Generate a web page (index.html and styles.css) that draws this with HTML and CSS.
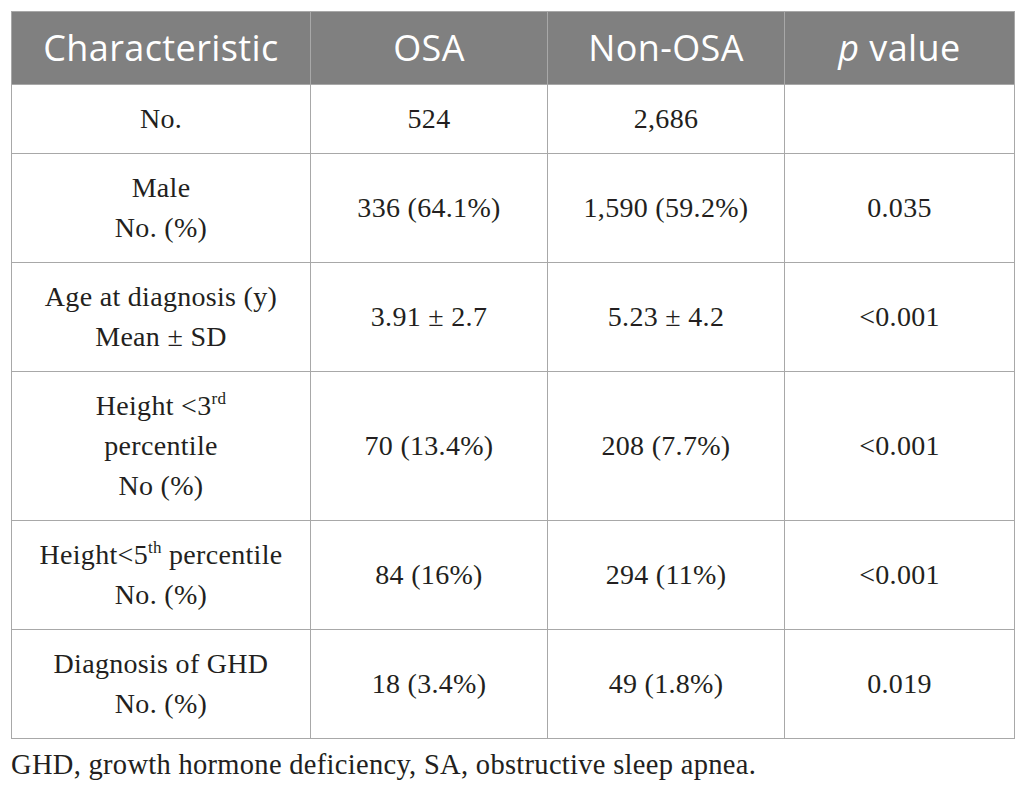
FILE: index.html
```html
<!DOCTYPE html>
<html>
<head>
<meta charset="utf-8">
<link rel="stylesheet" href="styles.css">
</head>
<body>
<div class="page">
  <table class="data">
    <colgroup>
      <col class="c1"><col class="c2"><col class="c3"><col class="c4">
    </colgroup>
    <thead>
      <tr>
        <th>Characteristic</th>
        <th>OSA</th>
        <th>Non-OSA</th>
        <th><i>p</i> value</th>
      </tr>
    </thead>
    <tbody>
      <tr><td>No.</td><td>524</td><td>2,686</td><td></td></tr>
      <tr><td>Male<br>No. (%)</td><td>336 (64.1%)</td><td>1,590 (59.2%)</td><td>0.035</td></tr>
      <tr><td>Age at diagnosis (y)<br>Mean ± SD</td><td>3.91 ± 2.7</td><td>5.23 ± 4.2</td><td>&lt;0.001</td></tr>
      <tr><td>Height &lt;3<sup>rd</sup><br>percentile<br>No (%)</td><td>70 (13.4%)</td><td>208 (7.7%)</td><td>&lt;0.001</td></tr>
      <tr><td>Height&lt;5<sup>th</sup> percentile<br>No. (%)</td><td>84 (16%)</td><td>294 (11%)</td><td>&lt;0.001</td></tr>
      <tr><td>Diagnosis of GHD<br>No. (%)</td><td>18 (3.4%)</td><td>49 (1.8%)</td><td>0.019</td></tr>
    </tbody>
  </table>
  <p class="note">GHD, growth hormone deficiency, SA, obstructive sleep apnea.</p>
</div>
</body>
</html>
```

FILE: styles.css
```css
html, body {
  margin: 0;
  padding: 0;
  background: #ffffff;
}

.page {
  padding: 11px 12px 0 11px;
}

.data {
  width: 1003px;
  border-collapse: collapse;
  table-layout: fixed;
  font-family: "Liberation Serif", "Times New Roman", serif;
  color: #231f20;
}

.c1 { width: 299px; }
.c2 { width: 237px; }
.c3 { width: 237px; }
.c4 { width: 230px; }

.data th,
.data td {
  border: 1px solid #a8a8a8;
  text-align: center;
  vertical-align: middle;
}

.data th {
  background: #808080;
  color: #ffffff;
  font-family: "Open Sans", "Liberation Sans", sans-serif;
  font-weight: 400;
  font-size: 36px;
  letter-spacing: 0.4px;
  line-height: 44px;
  padding: 14px 6px;
}

.data td {
  font-size: 28px;
  letter-spacing: 0.3px;
  line-height: 40px;
  padding: 14px 6px;
}

.data sup {
  font-size: 17px;
  line-height: 0;
  vertical-align: 11px;
}

.note {
  margin: 6px 0 0 0;
  font-family: "Liberation Serif", "Times New Roman", serif;
  font-size: 28.5px;
  letter-spacing: 0.3px;
  line-height: 40px;
  color: #231f20;
}
```
